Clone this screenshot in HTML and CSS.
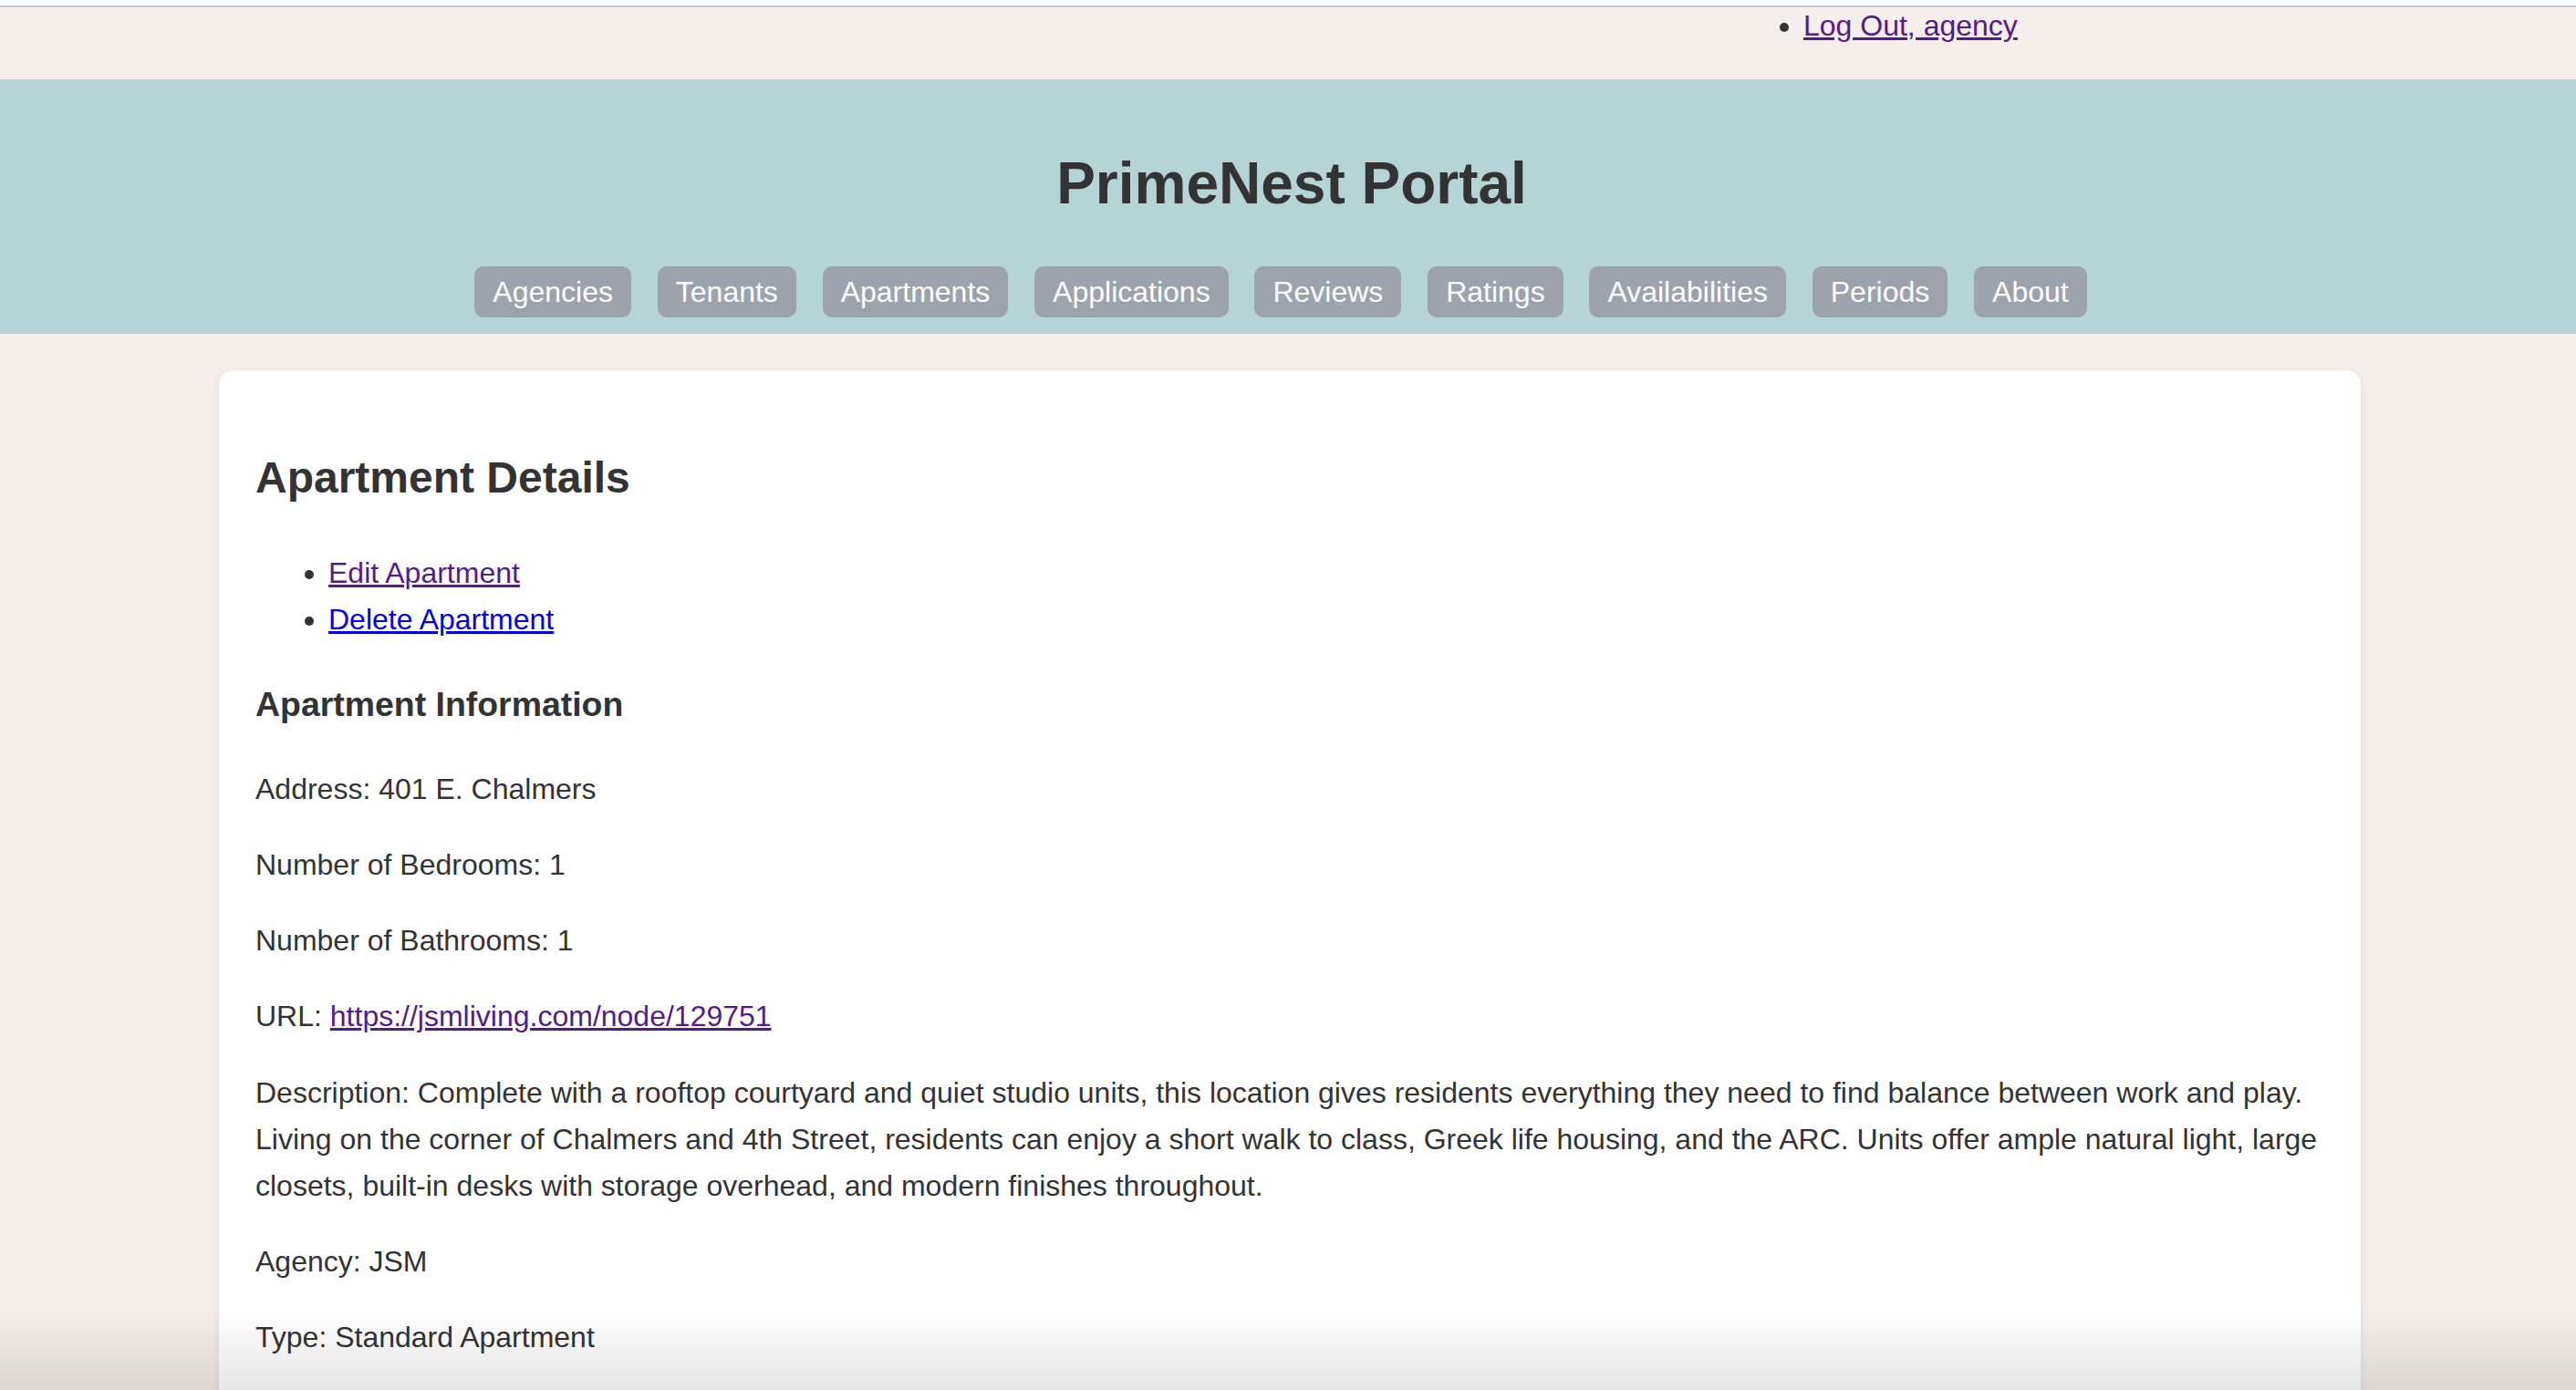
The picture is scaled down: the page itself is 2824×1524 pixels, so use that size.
FILE: index.html
```html
<!DOCTYPE html>
<html lang="en">
<head>
<meta charset="utf-8">
<title>PrimeNest Portal - Apartment Details</title>
<link rel="stylesheet" href="styles.css">
</head>
<body>
<div class="topstrip"></div>
<div class="userbar">
  <ul class="usermenu">
    <li><a class="visited" href="#">Log Out, agency</a></li>
  </ul>
</div>
<header class="site-header">
  <h1 class="site-title">PrimeNest Portal</h1>
  <nav>
    <ul class="navlist">
      <li><a href="#">Agencies</a></li>
      <li><a href="#">Tenants</a></li>
      <li><a href="#">Apartments</a></li>
      <li><a href="#">Applications</a></li>
      <li><a href="#">Reviews</a></li>
      <li><a href="#">Ratings</a></li>
      <li><a href="#">Availabilities</a></li>
      <li><a href="#">Periods</a></li>
      <li><a href="#">About</a></li>
    </ul>
  </nav>
</header>
<div class="page">
  <main class="card">
    <h2>Apartment Details</h2>
    <ul class="actions">
      <li><a class="visited" href="#">Edit Apartment</a></li>
      <li><a class="fresh" href="#">Delete Apartment</a></li>
    </ul>
    <h3>Apartment Information</h3>
    <p>Address: 401 E. Chalmers</p>
    <p>Number of Bedrooms: 1</p>
    <p>Number of Bathrooms: 1</p>
    <p>URL: <a class="visited" href="#">https://jsmliving.com/node/129751</a></p>
    <p>Description: Complete with a rooftop courtyard and quiet studio units, this location gives residents everything they need to find balance between work and play. Living on the corner of Chalmers and 4th Street, residents can enjoy a short walk to class, Greek life housing, and the ARC. Units offer ample natural light, large closets, built-in desks with storage overhead, and modern finishes throughout.</p>
    <p>Agency: JSM</p>
    <p>Type: Standard Apartment</p>
  </main>
</div>
<div class="bottom-shade"></div>
</body>
</html>
```

FILE: styles.css
```css
html, body {
  margin: 0;
  padding: 0;
}

body {
  background: #f4efea;
  color: #333333;
  font-family: "Liberation Sans", Arial, Helvetica, sans-serif;
  font-size: 32px;
  line-height: 1.6;
}

.topstrip {
  height: 6px;
  background: #f6fcfc;
  border-bottom: 2px solid #bccfd0;
}

.userbar {
  padding: 2px 0 40px;
}

.usermenu {
  margin: 0;
  padding: 0 0 0 1977px;
  line-height: normal;
}

a.visited {
  color: #551a8b;
}

a.fresh {
  color: #0000ee;
}

.site-header {
  background: #b4d4d5;
  padding: 20px 0;
  text-align: center;
}

.site-title {
  margin: 42.9px 0;
  padding-left: 8px;
  font-size: 64px;
  font-weight: bold;
  color: #333333;
}

.navlist {
  list-style: none;
  margin: 0;
  padding: 0 16px 0 0;
  display: flex;
  justify-content: center;
  gap: 28.8px;
}

.navlist li {
  display: block;
}

.navlist a {
  background: #9ca3ad;
  color: #ffffff;
  text-decoration: none;
  padding: 10px 20px;
  border-radius: 10px;
}

.page {
  padding: 40px 0 0 4px;
}

.card {
  display: block;
  width: 2348px;
  margin: 0 auto;
  box-sizing: border-box;
  padding: 40px 40px;
  background: #ffffff;
  border-radius: 16px;
  box-shadow: 0 2px 10px rgba(0, 0, 0, 0.08);
}

.card h2 {
  font-size: 48px;
  margin: 39.8px 0;
}

.card h3 {
  font-size: 37.44px;
  margin: 37.44px 0;
}

.card p {
  margin: 32px 0;
}

.actions {
  margin: 32px 0;
  padding-left: 80px;
}

.bottom-shade {
  position: fixed;
  left: 0;
  right: 0;
  bottom: 0;
  height: 90px;
  pointer-events: none;
  background: linear-gradient(to bottom, rgba(0, 0, 0, 0), rgba(0, 0, 0, 0.1));
}
```
